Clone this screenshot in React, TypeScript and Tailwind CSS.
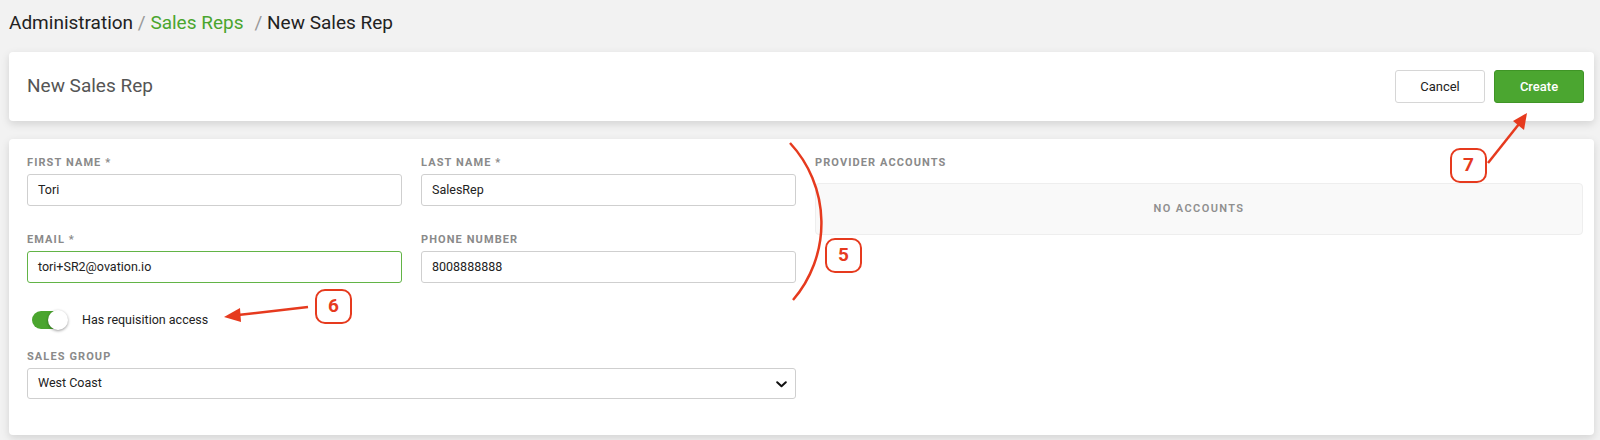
function Field({ label, value, focused }: { label: string; value: string; focused?: boolean }) {
  return (
    <div className="flex flex-col">
      <label className="text-[11px] font-bold tracking-[1.1px] text-[#8a8a8a] leading-[14px] mb-[4px]">{label}</label>
      <div
        className={`h-[32px] rounded-[3px] border px-[10px] flex items-center text-[12.5px] text-[#222] bg-white ${
          focused ? "border-[#62b446]" : "border-[#cfcfcf]"
        }`}
      >
        {value}
      </div>
    </div>
  );
}

function Badge({ n, className }: { n: string; className: string }) {
  return (
    <div
      className={`absolute w-[37px] h-[35px] rounded-[10px] border-[2.5px] border-[#e63a1e] bg-white flex items-center justify-center text-[19px] font-bold text-[#e63a1e] ${className}`}
    >
      {n}
    </div>
  );
}

export default function App() {
  return (
    <div className="relative w-[1600px] h-[440px] bg-[#f2f2f2] font-['Roboto',sans-serif] overflow-hidden">
      <div className="pl-[9px] pt-[11px] h-[52px] text-[19px] leading-[24px] text-[#222]">
        Administration <span className="text-[#999]">/</span>{" "}
        <span className="text-[#4aa52e]">Sales Reps</span>
        <span className="text-[#999] ml-[11px]">/</span> New Sales Rep
      </div>

      <div className="ml-[9px] w-[1585px] h-[69px] bg-white rounded-[4px] shadow-[0_3px_8px_rgba(0,0,0,0.13)] flex items-center justify-between pl-[18px] pr-[10px]">
        <div className="text-[19px] text-[#555]">New Sales Rep</div>
        <div className="flex gap-[9px]">
          <button className="w-[90px] h-[33px] rounded-[3px] border border-[#d6d6d6] bg-white text-[13px] text-[#222]">
            Cancel
          </button>
          <button className="w-[90px] h-[33px] rounded-[3px] border border-[#3f9526] bg-[#4ba630] text-[13px] font-medium text-white">
            Create
          </button>
        </div>
      </div>

      <div className="ml-[9px] mt-[18px] w-[1585px] h-[296px] bg-white rounded-[4px] shadow-[0_3px_8px_rgba(0,0,0,0.13)] flex pl-[18px] pr-[11px] pt-[17px] gap-[19px]">
        <div className="w-[769px] flex flex-col">
          <div className="grid grid-cols-2 gap-x-[19px] gap-y-[27px]">
            <Field label="FIRST NAME *" value="Tori" />
            <Field label="LAST NAME *" value="SalesRep" />
            <Field label="EMAIL *" value="tori+SR2@ovation.io" focused />
            <Field label="PHONE NUMBER" value="8008888888" />
          </div>
          <div className="flex items-center mt-[25px] ml-[5px] h-[24px]">
            <div className="relative w-[35px] h-[18px] rounded-full bg-[#4aa52e]">
              <div className="absolute right-[-1px] top-[-1px] w-[20px] h-[20px] rounded-full bg-white shadow-[0_1px_3px_rgba(0,0,0,0.4)]" />
            </div>
            <span className="ml-[15px] text-[12.5px] text-[#222]">Has requisition access</span>
          </div>
          <div className="flex flex-col mt-[18px]">
            <label className="text-[11px] font-bold tracking-[1.1px] text-[#8a8a8a] leading-[14px] mb-[4px]">SALES GROUP</label>
            <div className="h-[31px] rounded-[3px] border border-[#cfcfcf] pl-[10px] pr-[8px] flex items-center justify-between text-[12.5px] text-[#222]">
              West Coast
              <svg width="11" height="7" viewBox="0 0 11 7" className="mt-[1px]">
                <path d="M1.2 1.2 L5.5 5.3 L9.8 1.2" fill="none" stroke="#111" strokeWidth="2" strokeLinecap="round" strokeLinejoin="round" />
              </svg>
            </div>
          </div>
        </div>

        <div className="flex-1 flex flex-col">
          <div className="text-[11px] font-bold tracking-[1.1px] text-[#8a8a8a] leading-[14px] mb-[13px]">PROVIDER ACCOUNTS</div>
          <div className="h-[52px] rounded-[4px] border border-[#eeeeee] bg-[#f9f9f9] flex items-center justify-center text-[11px] font-semibold tracking-[1.4px] text-[#8f8f8f]">
            NO ACCOUNTS
          </div>
        </div>
      </div>

      <svg className="absolute inset-0 pointer-events-none" width="1600" height="440">
        <path d="M 790 143 A 118 118 0 0 1 793 300" fill="none" stroke="#e63a1e" strokeWidth="2.5" />
        <line x1="308" y1="307" x2="238" y2="315" stroke="#e63a1e" strokeWidth="2.5" />
        <polygon points="224,317 240,308 241,322" fill="#e63a1e" />
        <line x1="1488" y1="163" x2="1519" y2="124" stroke="#e63a1e" strokeWidth="2.5" />
        <polygon points="1527,113 1513,121 1524,130" fill="#e63a1e" />
      </svg>
      <Badge n="5" className="left-[825px] top-[238px]" />
      <Badge n="6" className="left-[315px] top-[289px]" />
      <Badge n="7" className="left-[1450px] top-[148px]" />
    </div>
  );
}
